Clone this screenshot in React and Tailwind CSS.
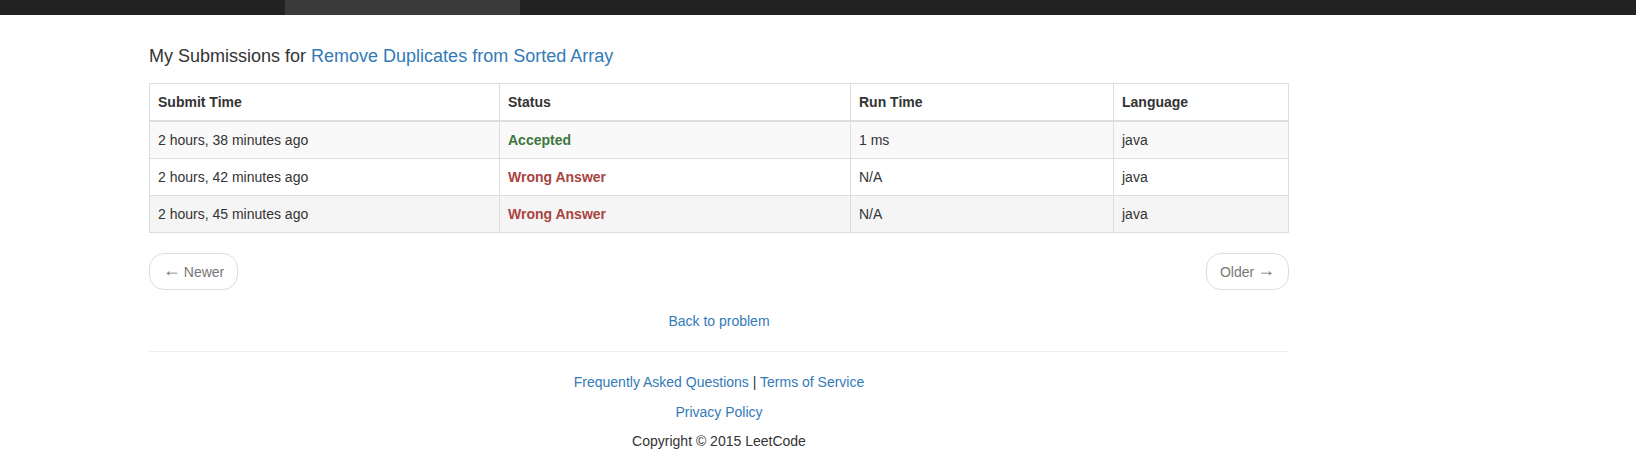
const ROWS = [
  { time: '2 hours, 38 minutes ago', status: 'Accepted', ok: true, run: '1 ms', lang: 'java', bg: 'bg-[#f9f9f9]' },
  { time: '2 hours, 42 minutes ago', status: 'Wrong Answer', ok: false, run: 'N/A', lang: 'java', bg: 'bg-white' },
  { time: '2 hours, 45 minutes ago', status: 'Wrong Answer', ok: false, run: 'N/A', lang: 'java', bg: 'bg-[#f5f5f5]' },
];

const cell = 'border border-[#ddd] px-2 py-2 leading-5 text-left align-top';

export default function App() {
  return (
    <div className="min-h-[474px] bg-white text-[14px] text-[#333] font-['Liberation_Sans',Arial,sans-serif]">
      {/* Top navbar */}
      <div className="h-[15px] bg-[#222] flex">
        <div className="ml-[285px] w-[235px] bg-[#3a3a3a]" />
      </div>

      <div className="ml-[149px] w-[1140px]">
        {/* Title */}
        <h4 className="mt-[31px] mb-[17px] text-[18px] leading-5 font-normal">
          My Submissions for{' '}
          <a href="#" className="text-[#337ab7]">Remove Duplicates from Sorted Array</a>
        </h4>

        {/* Submissions table */}
        <table className="w-full border-collapse border border-[#ddd]">
          <thead>
            <tr>
              <th className={`${cell} w-[350px] border-b-2 font-bold`}>Submit Time</th>
              <th className={`${cell} w-[351px] border-b-2 font-bold`}>Status</th>
              <th className={`${cell} w-[263px] border-b-2 font-bold`}>Run Time</th>
              <th className={`${cell} border-b-2 font-bold`}>Language</th>
            </tr>
          </thead>
          <tbody>
            {ROWS.map((r, i) => (
              <tr key={i} className={r.bg}>
                <td className={cell}>{r.time}</td>
                <td className={cell}>
                  <strong className={r.ok ? 'text-[#3c763d]' : 'text-[#a94442]'}>{r.status}</strong>
                </td>
                <td className={cell}>{r.run}</td>
                <td className={cell}>{r.lang}</td>
              </tr>
            ))}
          </tbody>
        </table>

        {/* Pager */}
        <div className="mt-[20px] flex justify-between">
          <a href="#" className="h-[37px] w-[89px] flex items-center justify-center gap-[3px] border border-[#ddd] rounded-[15px] text-[#777] leading-5">
            <span className="text-[18px] leading-none -mt-[4px]">←</span>Newer
          </a>
          <a href="#" className="h-[37px] w-[83px] flex items-center justify-center gap-[3px] border border-[#ddd] rounded-[15px] text-[#777] leading-5">
            Older<span className="text-[18px] leading-none -mt-[4px]">→</span>
          </a>
        </div>

        <p className="mt-[21px] text-center leading-5">
          <a href="#" className="text-[#337ab7]">Back to problem</a>
        </p>

        <hr className="mt-[20px] border-0 border-t border-[#eee]" />

        {/* Footer */}
        <div className="mt-[20px] text-center">
          <p className="leading-5 mb-[9.5px]">
            <a href="#" className="text-[#337ab7]">Frequently Asked Questions</a> |{' '}
            <a href="#" className="text-[#337ab7]">Terms of Service</a>
          </p>
          <p className="leading-5 mb-[9.5px]">
            <a href="#" className="text-[#337ab7]">Privacy Policy</a>
          </p>
          <p className="leading-5">Copyright © 2015 LeetCode</p>
        </div>
      </div>
    </div>
  );
}
